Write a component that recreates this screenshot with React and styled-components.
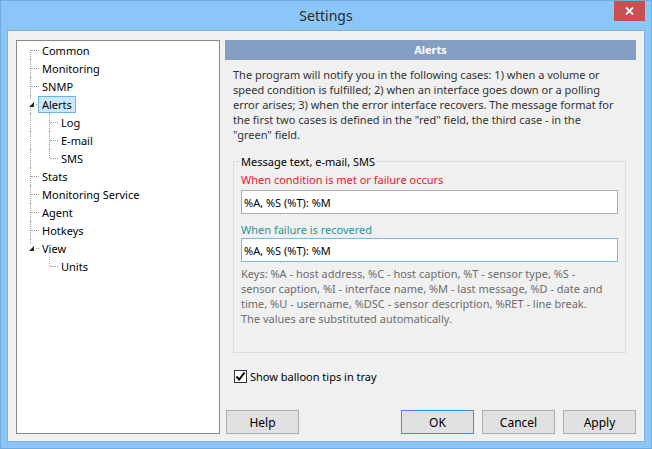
import React from 'react';
import styled, { createGlobalStyle } from 'styled-components';

const GlobalStyle = createGlobalStyle`
  html, body {
    margin: 0;
    padding: 0;
    background: #8bc6f8;
  }
  body {
    font-family: "Segoe UI", "Noto Sans", sans-serif;
    font-size: 11px;
  }
`;

const Window = styled.div`
  box-sizing: border-box;
  width: 652px;
  height: 449px;
  background: #8bc6f8;
  border: 1px solid #72acdf;
  display: flex;
  flex-direction: column;
  font-family: "Segoe UI", "Noto Sans", sans-serif;
  font-size: 11px;
`;

const TitleBar = styled.div`
  height: 29px;
  display: grid;
  grid-template-columns: 1fr auto 1fr;
  align-items: start;
`;

const Title = styled.div`
  grid-column: 2;
  line-height: 29px;
  font-size: 14px;
  color: #2b2b2b;
`;

const CloseButton = styled.div`
  grid-column: 3;
  justify-self: end;
  width: 31px;
  height: 20px;
  margin-right: 6px;
  background: #c75050;
  display: flex;
  align-items: center;
  justify-content: center;
`;

const Content = styled.div`
  box-sizing: border-box;
  height: 412px;
  margin: 0 6px 6px;
  background: #f0f0f0;
  border: 1px solid #7cb1e2;
  padding: 9px 8px 7px;
  display: flex;
  gap: 5px;
`;

const Tree = styled.div`
  box-sizing: border-box;
  flex: none;
  width: 204px;
  background: #fff;
  border: 1px solid #828790;
  padding: 0 0 0 3px;
`;

const TreeRow = styled.div`
  display: flex;
  align-items: center;
  height: 18px;
`;

const Cell = styled.span`
  position: relative;
  flex: none;
  box-sizing: border-box;
  width: 19px;
  height: 18px;
  display: flex;
  align-items: center;
  padding-left: 7px;
  &::before {
    content: '';
    position: absolute;
    left: 10px;
    top: ${(p) => (p.$line === 'bottom' ? '9px' : '0')};
    bottom: ${(p) => (p.$line === 'top' ? '9px' : '0')};
    border-left: ${(p) => (p.$line === 'none' ? '0' : '1px dotted #a0a0a0')};
  }
  &::after {
    content: '';
    display: ${(p) => (p.$branch ? 'block' : 'none')};
    position: absolute;
    left: 11px;
    top: 9px;
    width: 8px;
    border-top: 1px dotted #a0a0a0;
  }
`;

const Toggle = styled.span`
  position: relative;
  z-index: 1;
  width: 8px;
  height: 8px;
  background: #fff;
  display: flex;
`;

const TreeLabel = styled.span`
  box-sizing: border-box;
  height: 17px;
  line-height: 15px;
  margin-left: -1px;
  padding: 0 3px;
  border: 1px solid ${(p) => (p.$selected ? '#66b6e9' : 'transparent')};
  background: ${(p) => (p.$selected ? '#cde8fa' : 'transparent')};
  color: #000;
  white-space: nowrap;
`;

const Panel = styled.div`
  flex: 1;
  min-width: 0;
  display: flex;
  flex-direction: column;
`;

const PanelHeader = styled.div`
  height: 20px;
  line-height: 20px;
  background: #849fc3;
  color: #fff;
  font-weight: bold;
  text-align: center;
`;

const Description = styled.div`
  margin: 7px 0 0;
  padding: 0 8px;
  line-height: 15px;
  color: #333;
  white-space: nowrap;
`;

const Line = styled.div``;

const Group = styled.fieldset`
  margin: 12px 10px 0 8px;
  padding: 0 7px 26px;
  border: 1px solid #dcdcdc;
  min-width: 0;
`;

const Legend = styled.legend`
  padding: 0 1px;
  margin-left: -1px;
  line-height: 15px;
  color: #000;
`;

const FieldLabel = styled.div`
  margin-top: ${(p) => p.$gap}px;
  line-height: 15px;
  color: ${(p) => p.$color};
`;

const TextInput = styled.input`
  display: block;
  box-sizing: border-box;
  width: 100%;
  height: 24px;
  margin: ${(p) => p.$gap}px 0 0;
  padding: 0 2px;
  border: 1px solid ${(p) => (p.$focused ? '#7eb4ea' : '#abadb3')};
  background: #fff;
  font: inherit;
  color: #000;
  outline: none;
`;

const Keys = styled.div`
  margin-top: 4px;
  line-height: 15px;
  color: #6d6d6d;
  white-space: nowrap;
`;

const CheckRow = styled.label`
  display: flex;
  align-items: center;
  height: 16px;
  margin-top: 15px;
  padding-left: 9px;
  color: #000;
`;

const CheckBox = styled.span`
  box-sizing: border-box;
  width: 13px;
  height: 13px;
  border: 1px solid #333;
  background: #fff;
  display: flex;
  align-items: center;
  justify-content: center;
  margin-right: 3px;
`;

const ButtonRow = styled.div`
  margin-top: auto;
  display: flex;
  gap: 8px;
`;

const Button = styled.button`
  box-sizing: border-box;
  width: 73px;
  height: 24px;
  margin: ${(p) => (p.$left ? '0 auto 0 1px' : '0')};
  background: #e1e1e1;
  border: 1px solid ${(p) => (p.$default ? '#3c8fe0' : '#adadad')};
  font: inherit;
  font-size: 12px;
  color: #000;
  padding: 0;
`;

const treeData = [
  { label: 'Common' },
  { label: 'Monitoring' },
  { label: 'SNMP' },
  {
    label: 'Alerts',
    selected: true,
    children: [{ label: 'Log' }, { label: 'E-mail' }, { label: 'SMS' }],
  },
  { label: 'Stats' },
  { label: 'Monitoring Service' },
  { label: 'Agent' },
  { label: 'Hotkeys' },
  { label: 'View', children: [{ label: 'Units' }] },
];

const flatten = (nodes, guides = [], out = []) => {
  nodes.forEach((node, i) => {
    const isFirst = i === 0 && guides.length === 0;
    const isLast = i === nodes.length - 1;
    out.push({ ...node, guides, isFirst, isLast });
    if (node.children) flatten(node.children, [...guides, !isLast], out);
  });
  return out;
};

const lineKind = (row) => {
  if (row.isFirst && row.isLast) return 'none';
  if (row.isFirst) return 'bottom';
  if (row.isLast) return 'top';
  return 'full';
};

const SettingsTree = () => (
  <Tree>
    {flatten(treeData).map((row) => (
      <TreeRow key={row.label}>
        {row.guides.map((cont, i) => (
          <Cell key={i} $line={cont ? 'full' : 'none'} />
        ))}
        <Cell $line={lineKind(row)} $branch>
          {row.children && (
            <Toggle>
              <svg width="8" height="8" viewBox="0 0 8 8">
                <polygon points="7,2 7,7 2,7" fill="#262626" />
              </svg>
            </Toggle>
          )}
        </Cell>
        <TreeLabel $selected={row.selected}>{row.label}</TreeLabel>
      </TreeRow>
    ))}
  </Tree>
);

const description = [
  'The program will notify you in the following cases: 1) when a volume or',
  'speed condition is fulfilled; 2) when an interface goes down or a polling',
  'error arises; 3) when the error interface recovers. The message format for',
  'the first two cases is defined in the "red" field, the third case - in the',
  '"green" field.',
];

const keys = [
  'Keys: %A - host address, %C - host caption, %T - sensor type, %S -',
  'sensor caption, %I - interface name, %M - last message, %D - date and',
  'time, %U - username, %DSC - sensor description, %RET - line break.',
  'The values are substituted automatically.',
];

export default function App() {
  return (
    <>
      <GlobalStyle />
      <Window>
        <TitleBar>
          <Title>Settings</Title>
          <CloseButton>
            <svg width="9" height="8" viewBox="0 0 9 8">
              <path d="M1 0.5 L8 7.5 M8 0.5 L1 7.5" stroke="#fff" strokeWidth="1.8" />
            </svg>
          </CloseButton>
        </TitleBar>
        <Content>
          <SettingsTree />
          <Panel>
            <PanelHeader>Alerts</PanelHeader>
            <Description>
              {description.map((t) => (
                <Line key={t}>{t}</Line>
              ))}
            </Description>
            <Group>
              <Legend>Message text, e-mail, SMS</Legend>
              <FieldLabel $gap={3} $color="#f2132f">
                When condition is met or failure occurs
              </FieldLabel>
              <TextInput $gap={3} defaultValue="%A, %S (%T): %M" readOnly />
              <FieldLabel $gap={8} $color="#1e9597">
                When failure is recovered
              </FieldLabel>
              <TextInput $gap={1} $focused defaultValue="%A, %S (%T): %M" readOnly />
              <Keys>
                {keys.map((t) => (
                  <Line key={t}>{t}</Line>
                ))}
              </Keys>
            </Group>
            <CheckRow>
              <CheckBox>
                <svg width="11" height="11" viewBox="0 0 11 11">
                  <path d="M1.5 5.5 L4.2 8.5 L9.5 1.5" fill="none" stroke="#000" strokeWidth="2" />
                </svg>
              </CheckBox>
              Show balloon tips in tray
            </CheckRow>
            <ButtonRow>
              <Button $left>Help</Button>
              <Button $default>OK</Button>
              <Button>Cancel</Button>
              <Button>Apply</Button>
            </ButtonRow>
          </Panel>
        </Content>
      </Window>
    </>
  );
}
